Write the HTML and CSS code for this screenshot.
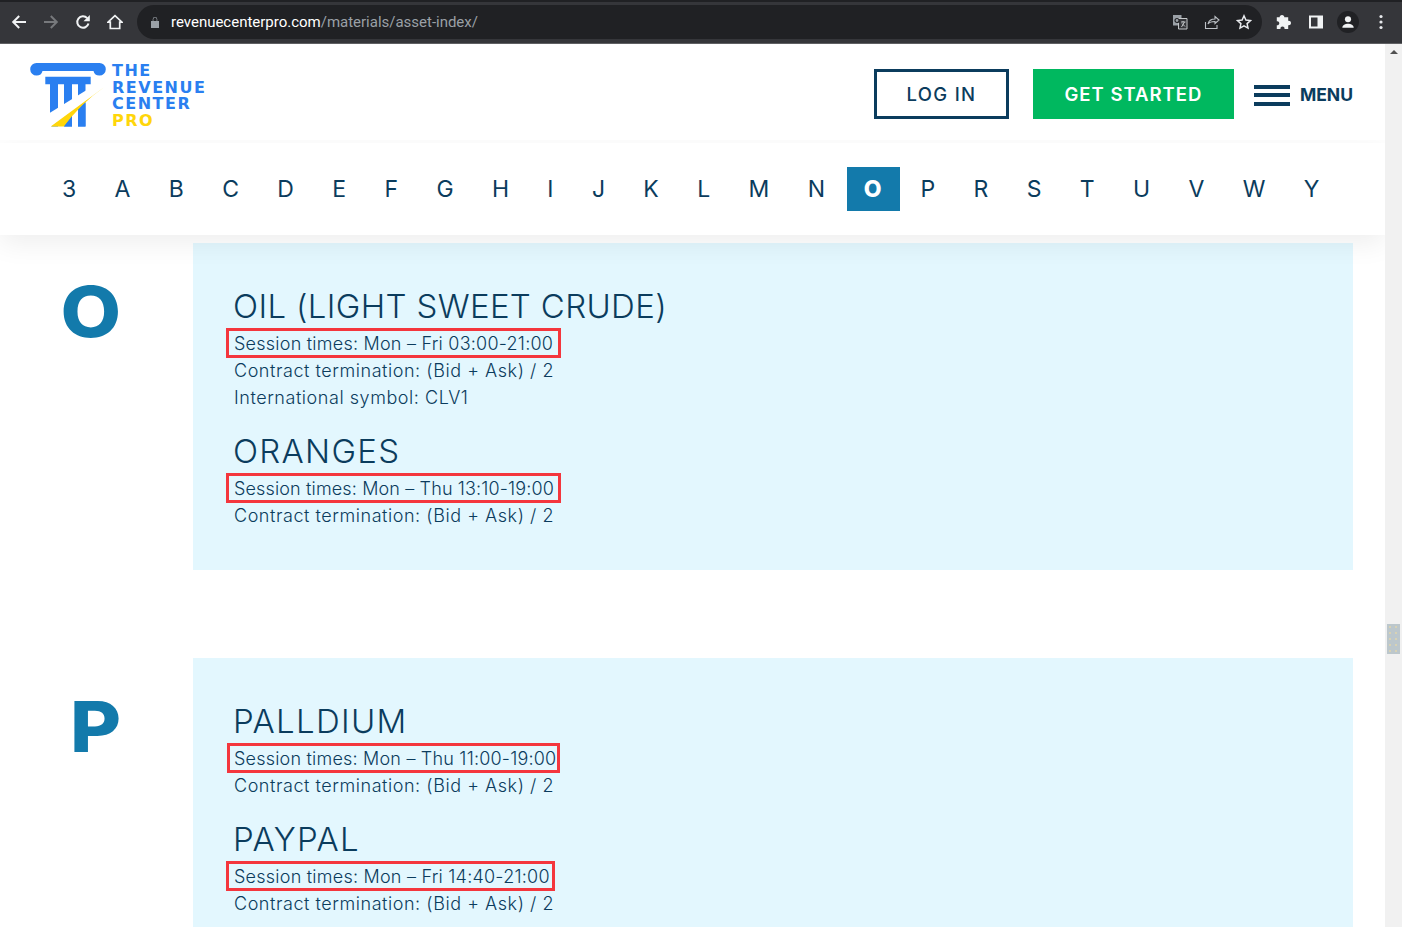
FILE: index.html
```html
<!DOCTYPE html>
<html lang="en">
<head>
<meta charset="utf-8">
<title>Asset index</title>
<link rel="stylesheet" href="styles.css">
</head>
<body>
<div class="browser">
  <div class="tabstrip"></div>
  <div class="toolbar">
    <svg class="tool" viewBox="0 0 16 16"><path d="M15 8H2.500M8.200 2 2.200 8l6 6" fill="none" stroke="#f1f3f4" stroke-width="2"/></svg>
    <svg class="tool" viewBox="0 0 16 16"><path d="M1 8h12.500M7.800 2l6 6-6 6" fill="none" stroke="#77797c" stroke-width="2"/></svg>
    <svg class="tool" viewBox="0 0 16 16"><path d="M13.500 9.500A5.700 5.700 0 1 1 12.200 4.200" fill="none" stroke="#f1f3f4" stroke-width="2"/><path d="M14.800 1v6.300H8.500z" fill="#f1f3f4"/></svg>
    <svg class="tool" viewBox="0 0 16 16"><path d="M8 1.600 1 8.200h2.300v6.300h9.400V8.200H15z" fill="none" stroke="#f1f3f4" stroke-width="1.700" stroke-linejoin="miter"/></svg>
    <div class="omnibox">
      <svg class="lock" viewBox="0 0 10 12"><path d="M1 5h8v7H1zM2.700 5V3.200a2.300 2.300 0 0 1 4.600 0V5" fill="#9aa0a6"/><path d="M3.400 5V3.200a1.600 1.600 0 0 1 3.200 0V5" fill="#202124"/></svg>
      <span class="url"><span class="host">revenuecenterpro.com</span>/materials/asset-index/</span>
      <div class="omni-actions">
        <svg class="omni-icon" viewBox="0 0 16 16"><path d="M1 1h8.500v10.500H1z" fill="#9aa0a6"/><path d="M6.500 4.500h8.500V15H6.500z" fill="#35363a" stroke="#c4c7c9" stroke-width="1"/><circle cx="5" cy="6.500" r="2" fill="none" stroke="#202124" stroke-width="1.200"/><path d="M9 8h4.500M11 7v1M9.500 13l3-5M10 9.500l3 3" fill="none" stroke="#c4c7c9" stroke-width="1"/></svg>
        <svg class="omni-icon" viewBox="0 0 16 16"><path d="M1.500 8v6.500H13V11M4 10c.8-3.500 3.500-5 7-5V2.500L15 6l-4 3.500V7.500C8 7.500 5.500 8 4 10z" fill="none" stroke="#bdc1c6" stroke-width="1.100"/></svg>
        <svg class="omni-icon" viewBox="0 0 16 16"><path d="m8 1.800 1.900 4.200 4.600.5-3.400 3.100.9 4.500L8 11.800l-4 2.300.9-4.500-3.400-3.100 4.600-.5z" fill="none" stroke="#e8eaed" stroke-width="1.500"/></svg>
      </div>
    </div>
    <div class="ext-actions">
      <svg class="ext" viewBox="0 0 16 16"><path d="M6 1c1.500 0 2.300 1 2.300 2.200h3.900v3.700c1.300-.3 2.800.5 2.800 2.200s-1.500 2.500-2.800 2.200V15H8.500c.3-1.300-.5-2.500-2-2.500s-2.300 1.200-2 2.500H.8v-3.700c1.300.2 2.500-.6 2.500-2S2.100 7 .8 7.300V3.200h2.900C3.700 2 4.500 1 6 1z" fill="#f1f3f4"/></svg>
      <svg class="ext" viewBox="0 0 16 16"><path d="M1 1.500h14v13H1z" fill="#f1f3f4"/><path d="M3 3.500h6.500v9H3z" fill="#35363a"/></svg>
      <div class="avatar"><svg viewBox="0 0 16 16"><circle cx="8" cy="4.800" r="3.500" fill="#f1f3f4"/><path d="M1.500 14.500c0-3 3.500-4.500 6.500-4.500s6.500 1.500 6.500 4.500z" fill="#f1f3f4"/></svg></div>
      <svg class="kebab" viewBox="0 0 4 16"><circle cx="2" cy="2.500" r="1.600" fill="#e8eaed"/><circle cx="2" cy="8" r="1.600" fill="#e8eaed"/><circle cx="2" cy="13.500" r="1.600" fill="#e8eaed"/></svg>
    </div>
  </div>
</div>
<div class="viewport">
  <div class="page">
    <header class="site-header">
      <a class="logo">
        <svg class="logo-mark" viewBox="0 0 76 64">
          <path d="M6.500 0H69.500a6.300 6.300 0 0 1 0 12.600A6 6 0 0 1 63.500 8H12.500a6 6 0 0 1-6 4.600 6.300 6.300 0 0 1 0-12.600z" fill="#2a7ff0"/>
          <path d="M15.300 13.700h45.400v7.600H15.300z" fill="#2a7ff0"/>
          <path d="M20 21h8v42.500H20zM34 21h8v42.500H34zM48 21h7.500v42.500H48z" fill="#2a7ff0"/>
          <path d="M15 53 20 49.700 76 15 76 24 21 64H15z" fill="#fff"/>
          <path d="M56 30 76 16V24L56 41z" fill="#fff"/>
          <path d="M20.700 63.500 74.700 23.700Q50 41 34 63.500z" fill="#ffd60a"/>
          <path d="M34 63.500 42 53.500V63.500zM48 47 55.500 40V63.500H48z" fill="#2a7ff0"/>
        </svg>
        <div class="logo-text">
          <span>THE</span><span>REVENUE</span><span>CENTER</span><span class="pro">PRO</span>
        </div>
      </a>
      <div class="header-actions">
        <a class="btn-login">LOG IN</a>
        <a class="btn-start">GET STARTED</a>
        <a class="menu"><span class="burger"><i></i><i></i><i></i></span><span class="menu-label">MENU</span></a>
      </div>
    </header>
    <nav class="alpha">
      <a>3</a><a>A</a><a>B</a><a>C</a><a>D</a><a>E</a><a>F</a><a>G</a><a>H</a><a>I</a><a>J</a><a>K</a><a>L</a><a>M</a><a>N</a><a class="active">O</a><a>P</a><a>R</a><a>S</a><a>T</a><a>U</a><a>V</a><a>W</a><a>Y</a>
    </nav>
    <main class="index">
      <section class="group">
        <div class="big-letter">O</div>
        <div class="panel">
          <article class="asset">
            <h2 class="snug">OIL (LIGHT SWEET CRUDE)</h2>
            <p class="mark">Session times: Mon – Fri 03:00-21:00</p>
            <p>Contract termination: (Bid + Ask) / 2</p>
            <p>International symbol: CLV1</p>
          </article>
          <article class="asset">
            <h2>ORANGES</h2>
            <p class="mark tight">Session times: Mon – Thu 13:10-19:00</p>
            <p>Contract termination: (Bid + Ask) / 2</p>
          </article>
        </div>
      </section>
      <section class="group">
        <div class="big-letter">P</div>
        <div class="panel">
          <article class="asset">
            <h2>PALLDIUM</h2>
            <p class="mark close">Session times: Mon – Thu 11:00-19:00</p>
            <p>Contract termination: (Bid + Ask) / 2</p>
          </article>
          <article class="asset">
            <h2>PAYPAL</h2>
            <p class="mark near">Session times: Mon – Fri 14:40-21:00</p>
            <p>Contract termination: (Bid + Ask) / 2</p>
          </article>
        </div>
      </section>
    </main>
  </div>
  <div class="scrollbar">
    <span class="arrow"></span>
    <span class="thumb"></span>
  </div>
</div>
</body>
</html>
```
FILE: styles.css
```css
* { box-sizing: border-box; }
html, body { margin: 0; height: 927px; overflow: hidden; }
body { font-family: Inter, "Liberation Sans", sans-serif; color: #0b3c5d; background: #fff; display: flex; flex-direction: column; }
a { color: inherit; text-decoration: none; }

.browser { height: 44px; flex: none; background: #35363a; border-bottom: 1px solid #5f6063; }
.tabstrip { height: 2px; background: #202124; }
.toolbar { display: flex; align-items: center; height: 40px; padding: 0 0 0 11px; }
.tool { width: 16px; height: 16px; margin-right: 16px; flex: none; }
.omnibox { width: 1125px; height: 34px; margin-left: -2px; border-radius: 17px; background: #202124; display: flex; align-items: center; padding: 0 10px 0 13px; }
.lock { width: 10px; height: 12px; flex: none; }
.url { margin-left: 11px; margin-top: -1px; font: 15px/20px "Roboto", sans-serif; letter-spacing: -.01px; color: #9aa0a6; white-space: nowrap; }
.host { color: #fff; }
.omni-actions { margin-left: auto; display: flex; gap: 16px; }
.omni-icon { width: 16px; height: 16px; }
.ext-actions { display: flex; align-items: center; margin-left: 14px; }
.ext { width: 16px; height: 16px; margin-right: 16px; }
.avatar { width: 22px; height: 22px; margin-left: -3px; border-radius: 50%; background: #202124; display: flex; align-items: center; justify-content: center; }
.avatar svg { width: 14px; height: 14px; }
.kebab { width: 4px; height: 16px; margin-left: 20px; }

.viewport { flex: 1; display: flex; min-height: 0; }
.page { flex: 1; min-width: 0; overflow: hidden; }
.scrollbar { width: 17px; background: #f1f1f1; position: relative; display: flex; flex-direction: column; align-items: center; }
.arrow { margin-top: 6px; width: 0; height: 0; border-left: 4px solid transparent; border-right: 4px solid transparent; border-bottom: 4px solid #505050; }
.thumb { position: absolute; left: 2px; top: 580px; width: 13px; height: 30px; background-color: #bcc7cc; background-image: radial-gradient(#d8d2b4 .8px, transparent 1px); background-size: 6px 6px; }

.site-header { height: 99px; display: flex; align-items: flex-start; justify-content: space-between; padding: 18px 32px 0 30px; }
.logo { display: flex; align-items: flex-start; gap: 6px; margin-top: 1px; }
.logo-mark { width: 76px; height: 64px; flex: none; }
.logo-text { display: flex; flex-direction: column; font-family: "DejaVu Sans", sans-serif; font-size: 16px; line-height: 16.700px; font-weight: 700; color: #2a7ff0; letter-spacing: 1.500px; }
.pro { color: #ffd60a; }
.header-actions { display: flex; align-items: center; height: 50px; margin-top: 7px; }
.btn-login { width: 135px; height: 50px; border: 3px solid #0b3c5d; display: flex; align-items: center; justify-content: center; font-size: 18.500px; font-weight: 500; letter-spacing: 1.300px; }
.btn-start { width: 201px; height: 50px; margin-left: 24px; background: #00b85f; color: #fff; display: flex; align-items: center; justify-content: center; font-size: 18.500px; font-weight: 600; letter-spacing: 1px; }
.menu { display: flex; align-items: center; margin-left: 20px; }
.burger { display: flex; flex-direction: column; gap: 4.500px; width: 36px; margin-top: 2px; }
.burger i { display: block; height: 4px; background: #0b3c5d; }
.menu-label { margin-left: 10px; font-size: 17.500px; font-weight: 700; }

.alpha { height: 92px; display: flex; align-items: center; gap: 4.850px; padding-left: 46px; box-shadow: 0 8px 26px rgba(0,0,0,.07); clip-path: inset(-3px 0 -40px 0); position: relative; }
.alpha a { height: 44px; padding: 0 16px; display: flex; align-items: center; font-size: 23px; font-weight: 400; letter-spacing: 1.500px; color: #0b3c5d; }
.alpha a.active { padding: 0 16.500px; background: #137aab; color: #fff; font-weight: 800; }

.index { padding: 8px 32px 0 0; }
.group { display: flex; margin-bottom: 88px; }
.big-letter { width: 193px; padding: 19px 72px 0 0; text-align: right; flex: none; font-size: 70px; line-height: 100px; font-weight: 800; color: #137aab; transform: scaleX(1.12); transform-origin: 121px 0; }
.panel { flex: 1; padding: 44px 40px 41px 41px; background: #e3f7fe; display: flex; flex-direction: column; gap: 21px; }
.asset h2 { margin: 0 0 5px -1px; font-size: 33px; line-height: 38px; font-weight: 300; letter-spacing: 1.300px; color: #0b3c5d; white-space: nowrap; }
.asset h2.snug { letter-spacing: .350px; }
.asset p { margin: 0; font-size: 18px; line-height: 27px; font-weight: 300; letter-spacing: .550px; color: #0b3c5d; white-space: nowrap; }
.asset p.mark { width: fit-content; border: 3px solid #f4363d; margin: -2px 0 -1px -8px; padding: 1px 5px 0; line-height: 23px; letter-spacing: .230px; }
.asset p.tight { letter-spacing: .140px; padding-right: 4px; }
.asset p.close { margin-left: -7px; padding: 1px 1px 0 4px; letter-spacing: .200px; }
.asset p.near { padding-right: 2.500px; }
```
